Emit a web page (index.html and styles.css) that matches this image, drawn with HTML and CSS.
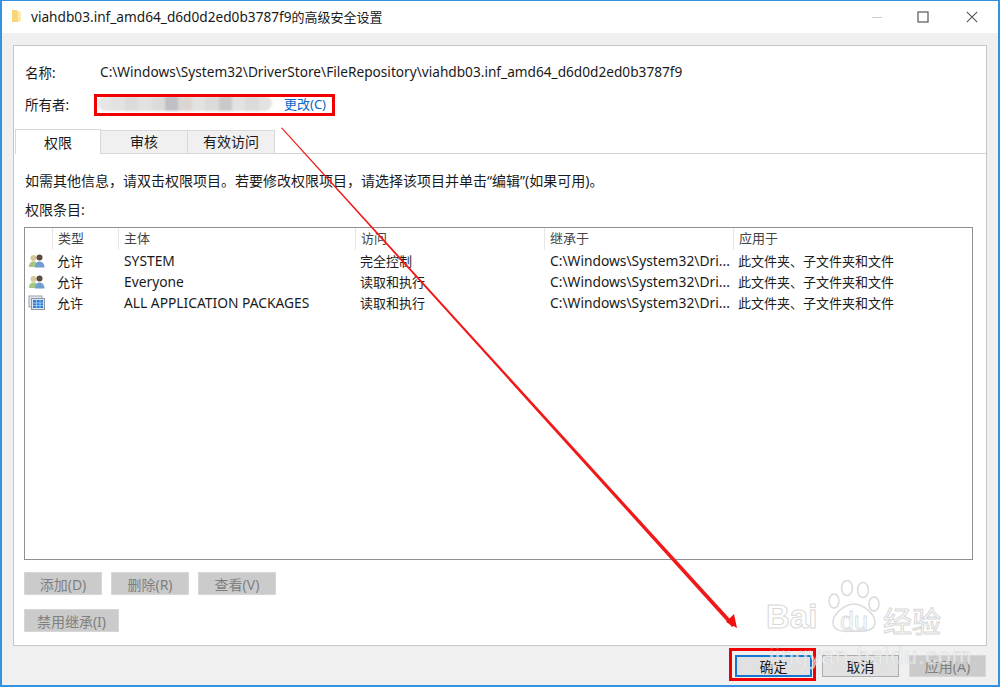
FILE: index.html
```html
<!DOCTYPE html>
<html lang="zh-CN">
<head>
<meta charset="utf-8">
<title>高级安全设置</title>
<link rel="stylesheet" href="styles.css">
</head>
<body>
<div class="window">
  <header class="titlebar">
    <svg class="folder" width="12" height="14" viewBox="0 0 12 14"><path d="M1 1h5l1 1.500v10.500H1z" fill="#f6d77a"/><path d="M7 2.500h3v9.500l-3 1z" fill="#fbe9ae"/></svg>
    <span class="title"><span class="lat">viahdb03.inf_amd64_d6d0d2ed0b3787f9</span>的高级安全设置</span>
    <div class="controls">
      <span class="ctl"><svg width="12" height="12" viewBox="0 0 12 12"><path d="M1 6.500h10" stroke="#ccc" stroke-width="1"/></svg></span>
      <span class="ctl"><svg width="12" height="12" viewBox="0 0 12 12"><rect x="1" y="1" width="10" height="10" fill="none" stroke="#555" stroke-width="1.200"/></svg></span>
      <span class="ctl"><svg width="12" height="12" viewBox="0 0 12 12"><path d="M.8.800l10.400 10.400M11.200.800L.8 11.200" stroke="#555" stroke-width="1.100"/></svg></span>
    </div>
  </header>
  <main class="content">
    <section class="panel">
      <div class="info">
        <div class="info-row"><span class="info-label">名称:</span><span class="lat">C:\Windows\System32\DriverStore\FileRepository\viahdb03.inf_amd64_d6d0d2ed0b3787f9</span></div>
        <div class="info-row">
          <span class="info-label">所有者:</span>
          <span class="owner">
            <span class="blur"><i class="b1"></i><i class="b2"></i><i class="b3"></i><i class="b2"></i><i class="b3"></i><i class="b4"></i><i class="b6"></i><i class="b2"></i><i class="b3"></i><i class="b5"></i><i class="b2"></i><i class="b3"></i><i class="b2"></i></span>
            <a class="link">更改(C)</a>
          </span>
        </div>
      </div>
      <nav class="tabs">
        <span class="tab active">权限</span><span class="tab t2">审核</span><span class="tab t3">有效访问</span>
      </nav>
      <p class="hint">如需其他信息，请双击权限项目。若要修改权限项目，请选择该项目并单击“编辑”(如果可用)。</p>
      <p class="entries">权限条目:</p>
      <div class="list">
        <div class="row head">
          <span></span><span class="hc">类型</span><span class="hc">主体</span><span class="hc">访问</span><span class="hc">继承于</span><span class="hc">应用于</span>
        </div>
        <div class="row">
          <span class="ic"><svg width="18" height="16" viewBox="0 0 18 16"><circle cx="5.500" cy="5" r="3" fill="#d9c79a"/><path d="M1 14c0-4 2-5.500 4.500-5.500S10 10 10 14z" fill="#a4c67f"/><circle cx="11.500" cy="4.500" r="3" fill="#5b4a3e"/><path d="M7 14.500c0-4 2-6 4.500-6s5 2 5 6z" fill="#6f9fd0"/></svg></span>
          <span>允许</span><span class="lat">SYSTEM</span><span>完全控制</span><span class="lat">C:\Windows\System32\Dri...</span><span>此文件夹、子文件夹和文件</span>
        </div>
        <div class="row">
          <span class="ic"><svg width="18" height="16" viewBox="0 0 18 16"><circle cx="5.500" cy="5" r="3" fill="#d9c79a"/><path d="M1 14c0-4 2-5.500 4.500-5.500S10 10 10 14z" fill="#a4c67f"/><circle cx="11.500" cy="4.500" r="3" fill="#5b4a3e"/><path d="M7 14.500c0-4 2-6 4.500-6s5 2 5 6z" fill="#6f9fd0"/></svg></span>
          <span>允许</span><span class="lat">Everyone</span><span>读取和执行</span><span class="lat">C:\Windows\System32\Dri...</span><span>此文件夹、子文件夹和文件</span>
        </div>
        <div class="row">
          <span class="ic"><svg width="18" height="16" viewBox="0 0 18 16"><rect x="1" y="1" width="13" height="11" fill="#e4e7eb" stroke="#9aa3ad"/><rect x="3.500" y="3.500" width="13" height="11" fill="#dbe6f0" stroke="#8b97a3"/><rect x="5" y="5" width="10" height="8" fill="#2f7fd6"/><path d="M5 8h10M5 10.500h10M8.500 5v8M12 5v8" stroke="#bcdcfa" stroke-width=".7"/></svg></span>
          <span>允许</span><span class="lat">ALL APPLICATION PACKAGES</span><span>读取和执行</span><span class="lat">C:\Windows\System32\Dri...</span><span>此文件夹、子文件夹和文件</span>
        </div>
      </div>
      <div class="btn-row">
        <span class="btn off">添加(D)</span><span class="btn off">删除(R)</span><span class="btn off">查看(V)</span>
      </div>
      <div class="btn-row second">
        <span class="btn off wide">禁用继承(I)</span>
      </div>
    </section>
    <footer class="actions">
      <span class="btn foot primary">确定</span><span class="btn foot">取消</span><span class="btn foot off">应用(A)</span>
    </footer>
  </main>

  <svg class="arrow" width="1000" height="687" viewBox="0 0 1000 687">
    <polygon points="281,128 282,127.500 735,624.500 732,627" fill="#f01818"/>
    <polygon points="737,628 726,622 734,614" fill="#f01010"/>
  </svg>
  <div class="redbox owner-box"></div>
  <div class="redbox ok-box"></div>

  <div class="mark">
    <span class="mark-bai">Bai</span>
    <svg class="paw" width="54" height="54" viewBox="0 0 54 54"><g fill="#fff" fill-opacity=".45" stroke="#dadada" stroke-width="1.500"><ellipse cx="7" cy="21" rx="5" ry="7"/><ellipse cx="20" cy="8" rx="5.500" ry="7.500"/><ellipse cx="36" cy="10" rx="5.500" ry="7.500"/><ellipse cx="47" cy="24" rx="5" ry="7"/><path d="M6 42c0-8 12-18 21-18s21 10 21 18c0 9-10 10-21 9-10 1-21 1-21-9z"/></g></svg>
    <span class="mark-du">du</span>
    <span class="mark-cn">经验</span>
    <span class="mark-url">jingyan.baidu.com</span>
  </div>
</div>
</body>
</html>
```
FILE: styles.css
```css
* { box-sizing: border-box; }
html, body { margin: 0; padding: 0; }
body {
  width: 1000px;
  height: 687px;
  overflow: hidden;
  font-family: "Noto Sans", "Noto Sans CJK SC", sans-serif;
  font-size: 13px;
  color: #1a1a1a;
}
.lat { font-size: 13.660px; }
.window {
  position: relative;
  width: 1000px;
  height: 687px;
  display: flex;
  flex-direction: column;
  border: 2px solid #3592e2;
  border-top-width: 1px;
  background: #f0f0f0;
  overflow: hidden;
}
.titlebar {
  flex: none;
  height: 32px;
  background: #fff;
  display: flex;
  align-items: center;
  padding: 0 0 2px 9px;
}
.title { margin-left: 8px; font-size: 13px; }
.controls { margin-left: auto; display: flex; }
.ctl {
  width: 46px;
  height: 30px;
  display: flex;
  align-items: center;
  justify-content: center;
  padding-top: 1px;
}
.ctl:last-child { width: 52px; }
.content {
  flex: 1;
  display: flex;
  flex-direction: column;
  padding: 12px 11px 0 11px;
}
.panel {
  height: 601px;
  background: #fff;
  border: 1px solid #c6c6c6;
  display: flex;
  flex-direction: column;
}
.info { padding: 15px 0 0 11px; height: 83px; }
.info-row { display: flex; align-items: center; height: 21px; margin-bottom: 11px; }
.info-label { width: 75px; flex: none; font-size: 13.500px; }
.owner { display: flex; align-items: center; }
.blur {
  display: flex;
  width: 174px;
  height: 15px;
  margin-left: -2px;
  border-radius: 8px;
  overflow: hidden;
  filter: blur(1px);
}
.blur i { flex: 1; display: block; }
.blur .b1 { background: #e6e6e6; }
.blur .b2 { background: #e2e2e0; }
.blur .b3 { background: #dbdbd9; }
.blur .b4 { background: #bfc0c4; }
.blur .b5 { background: #c9c9ca; }
.blur .b6 { background: #dcd6d2; }
.link { color: #0a66c8; margin-left: 12px; }
.tabs {
  display: flex;
  align-items: flex-end;
  height: 25px;
  margin-left: 1px;
  border-bottom: 1px solid #d4d4d4;
  font-size: 14px;
}
.tab {
  width: 87px;
  height: 24px;
  padding-bottom: 2px;
  display: flex;
  align-items: center;
  justify-content: center;
  background: #f0f0f0;
  border: 1px solid #d9d9d9;
  border-left: 0;
  margin-bottom: -1px;
}
.tab.active {
  width: 86px;
  height: 25px;
  padding: 0;
  background: #fff;
  border-bottom: 0;
  border-left: 1px solid #d9d9d9;
  margin-bottom: -1px;
}
.hint { margin: 17px 0 0 11px; line-height: 20px; font-size: 14px; }
.entries { margin: 9px 0 0 11px; line-height: 20px; font-size: 14px; }
.list {
  margin: 7px 13px 0 10px;
  height: 333px;
  border: 1px solid #8f8f8f;
  flex: none;
}
.row {
  display: grid;
  grid-template-columns: 27px 66px 237px 189px 189px 1fr;
  height: 21px;
  align-items: center;
}
.row span:not(.ic) { padding-left: 5px; }
.row .lat { font-size: 13.800px; }
.row span.lat { padding-left: 6px; }
.row.head { height: 22px; color: #444; }
.hc { height: 22px; line-height: 20px; border-left: 1px solid #e6e6e6; }
.ic { display: flex; padding-left: 3px; }
.btn-row { display: flex; gap: 9px; margin: 12px 0 0 10px; font-size: 14px; }
.btn-row.second { margin-top: 14px; }
.btn {
  width: 78px;
  height: 23px;
  display: flex;
  align-items: center;
  justify-content: center;
  background: #e1e1e1;
  border: 1px solid #adadad;
  font-size: 14px;
}
.btn.off { background: #cbcbcb; border-color: #d6d6d6; color: #7f7f7f; }
.btn.wide { width: 95px; }
.actions { display: flex; justify-content: flex-end; gap: 10px; margin-top: 9px; padding-right: 1px; }
.foot { height: 22px; width: 77px; }
.primary { border: 2px solid #1677d2; }
.arrow { position: absolute; left: -2px; top: -1px; pointer-events: none; }
.redbox { position: absolute; border: 3px solid #f00000; pointer-events: none; }
.owner-box { left: 92px; top: 93px; width: 241px; height: 22px; }
.ok-box { left: 727px; top: 647px; width: 87px; height: 33px; }
.mark { position: absolute; left: 0; top: 0; pointer-events: none; color: rgba(255,255,255,.5); -webkit-text-stroke: 1px #d8d8d8; }
.mark span { position: absolute; white-space: nowrap; font-family: "Liberation Sans", sans-serif; }
.mark-bai { left: 764px; top: 597px; font-size: 33px; line-height: 38px; font-weight: 700; }
.paw { position: absolute; left: 825px; top: 579px; }
.mark-du { left: 838px; top: 606px; font-size: 25px; line-height: 28px; -webkit-text-stroke-width: .8px; }
.mark .mark-cn { left: 881px; top: 600px; font-family: "Noto Sans CJK SC", sans-serif; font-size: 29px; line-height: 38px; }
.mark-url { left: 767px; top: 641px; font-size: 23.500px; line-height: 28px; letter-spacing: .8px; -webkit-text-stroke-width: .6px; }
```
